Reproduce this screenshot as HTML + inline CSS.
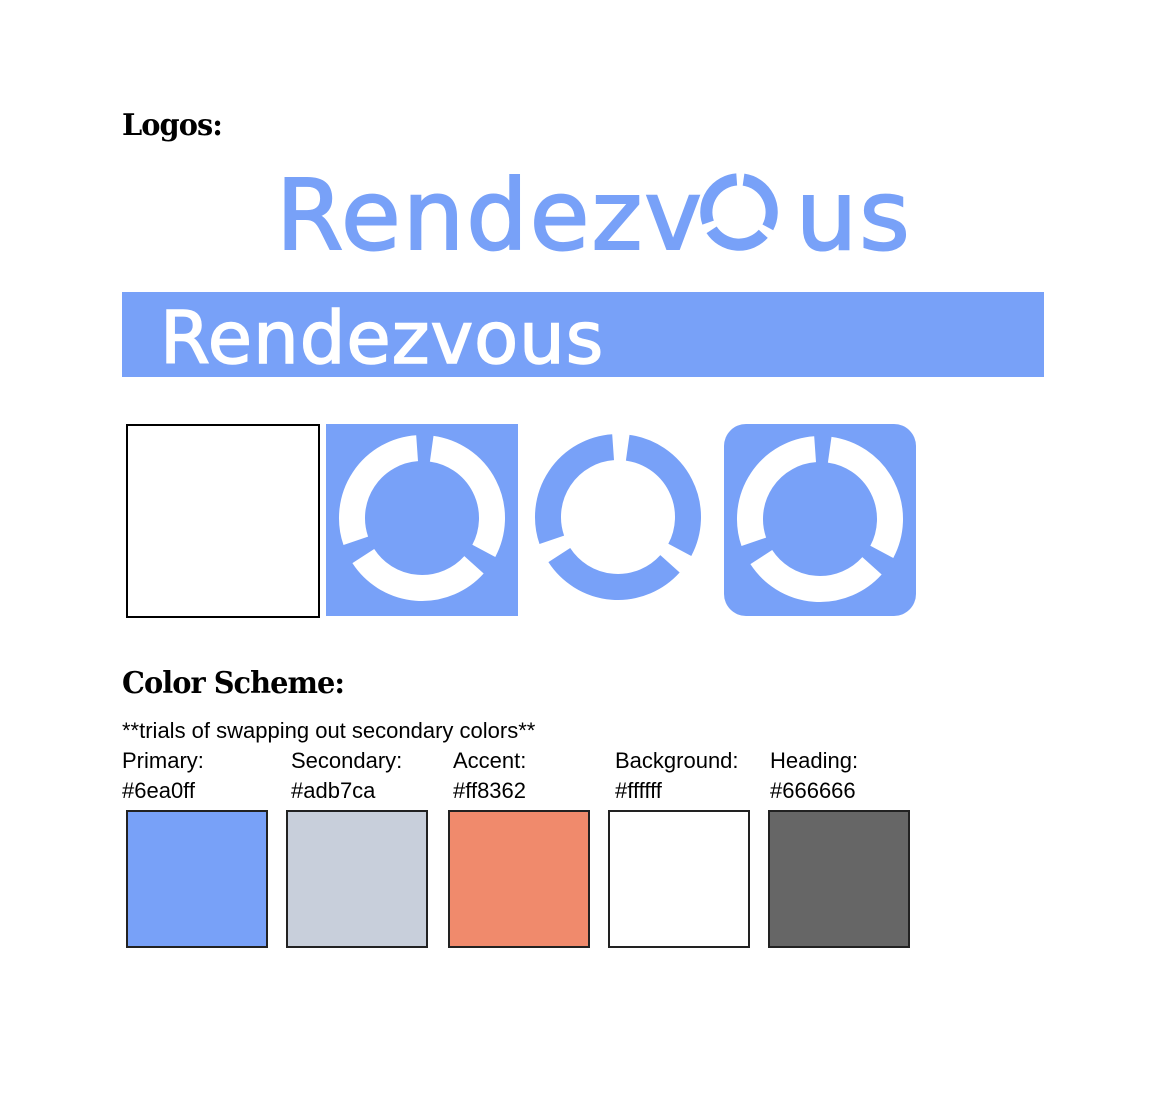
<!DOCTYPE html>
<html><head><meta charset="utf-8"><style>
body{margin:0;width:1162px;height:1102px;background:#fff;position:relative;overflow:hidden;font-family:"Liberation Sans",sans-serif;color:#000}
.a{position:absolute}
h1{position:absolute;margin:0;font-family:"DejaVu Serif","Liberation Serif",serif;font-weight:bold;font-size:30px;letter-spacing:-1px;transform:scaleX(0.96);transform-origin:left}
.t{font-size:22px;position:absolute;white-space:nowrap}
.sw{position:absolute;top:810px;width:138px;height:134px;border:2px solid #222}
</style></head><body>
<svg width="0" height="0" style="position:absolute"><defs>
<g id="ring" fill="none" stroke-width="26">
<path d="M52 46.8 A70 70 0 0 1 -58.7 38.1"/>
<path d="M-66.2 22.8 A70 70 0 0 1 -4.9 -69.8"/>
<path d="M9.7 -69.3 A70 70 0 0 1 61.8 32.9"/>
</g></defs></svg>
<h1 style="left:122px;top:108px">Logos:</h1>
<div class="a" style="left:276px;top:156px;font-family:'DejaVu Sans',sans-serif;font-size:97px;color:#78a1f8;-webkit-text-stroke:2px #78a1f8;line-height:120px;letter-spacing:2px">Rendezv<span style="display:inline-block;width:92px"></span>us</div>
<svg class="a" style="left:694px;top:170px" width="90" height="84" viewBox="-96 -90 192 180"><use href="#ring" stroke="#78a1f8"/></svg>
<div class="a" style="left:122px;top:292px;width:922px;height:85px;background:#78a1f8"></div>
<div class="a" style="left:160px;top:293px;font-family:'DejaVu Sans',sans-serif;font-size:72px;color:#fff;-webkit-text-stroke:1.5px #fff;line-height:90px;letter-spacing:1px">Rendezvous</div>
<div class="a" style="left:126px;top:424px;width:190px;height:190px;border:2px solid #000"></div>
<svg class="a" style="left:326px;top:424px" width="192" height="192" viewBox="-96 -96 192 192"><rect x="-96" y="-96" width="192" height="192" fill="#78a1f8"/><use href="#ring" stroke="#fff" transform="translate(0,-2)"/></svg>
<svg class="a" style="left:524px;top:424px" width="192" height="192" viewBox="-96 -96 192 192"><use href="#ring" stroke="#78a1f8" transform="translate(-2,-3)"/></svg>
<svg class="a" style="left:724px;top:424px" width="192" height="192" viewBox="-96 -96 192 192"><rect x="-96" y="-96" width="192" height="192" rx="22" fill="#78a1f8"/><use href="#ring" stroke="#fff" transform="translate(0,-1)"/></svg>
<h1 style="left:122px;top:666px">Color Scheme:</h1>
<div class="t" style="left:122px;top:718px">**trials of swapping out secondary colors**</div>
<div class="t" style="left:122px;top:748px">Primary:</div>
<div class="t" style="left:291px;top:748px">Secondary:</div>
<div class="t" style="left:453px;top:748px">Accent:</div>
<div class="t" style="left:615px;top:748px">Background:</div>
<div class="t" style="left:770px;top:748px">Heading:</div>
<div class="t" style="left:122px;top:778px">#6ea0ff</div>
<div class="t" style="left:291px;top:778px">#adb7ca</div>
<div class="t" style="left:453px;top:778px">#ff8362</div>
<div class="t" style="left:615px;top:778px">#ffffff</div>
<div class="t" style="left:770px;top:778px">#666666</div>
<div class="sw" style="left:126px;background:#78a1f8"></div>
<div class="sw" style="left:286px;background:#c8cfdb"></div>
<div class="sw" style="left:448px;background:#f08a6c"></div>
<div class="sw" style="left:608px;background:#fff"></div>
<div class="sw" style="left:768px;background:#666"></div>
</body></html>
